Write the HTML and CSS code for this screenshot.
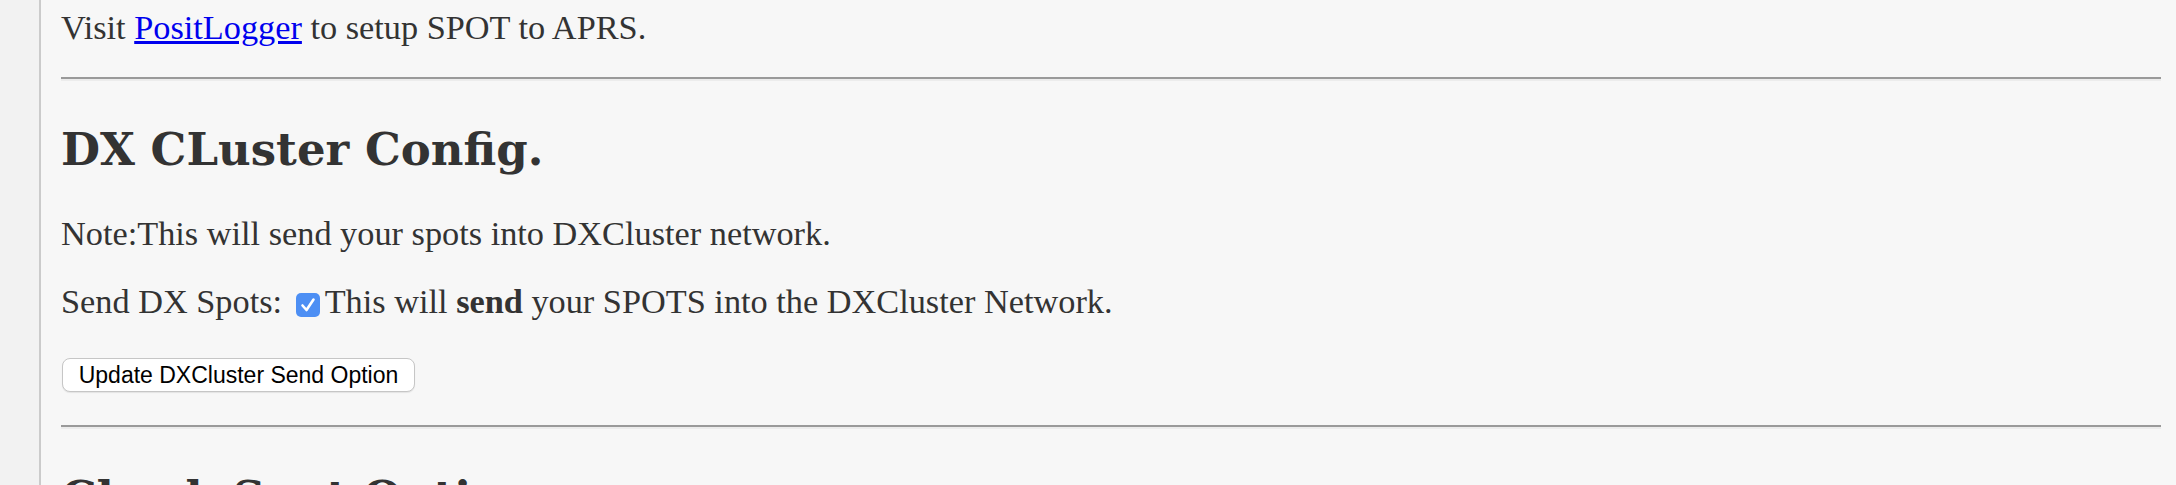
FILE: index.html
```html
<!DOCTYPE html>
<html>
<head>
<meta charset="utf-8">
<link rel="stylesheet" href="styles.css">
</head>
<body>
<div class="page">
  <aside class="side"></aside>
  <main class="content">
    <p class="first">Visit <a href="#">PositLogger</a> to setup SPOT to APRS.</p>
    <hr>
    <h2>DX CLuster Config.</h2>
    <p>Note:This will send your spots into DXCluster network.</p>
    <p class="opt">Send DX Spots: <span class="check"><svg width="24" height="24" viewBox="0 0 24 24"><rect x="0" y="0" width="24" height="24" rx="5" fill="#4d8ff4"/><polyline points="6.5,12.5 10.5,17 17.5,6.5" fill="none" stroke="#fff" stroke-width="2.6" stroke-linecap="round" stroke-linejoin="round"/></svg></span>This will <b>send</b> your SPOTS into the DXCluster Network.</p>
    <button class="btn" type="button">Update DXCluster Send Option</button>
    <hr>
    <h2>Check Spot Options</h2>
  </main>
</div>
</body>
</html>
```

FILE: styles.css
```css
html, body {
  margin: 0;
  padding: 0;
  height: 100%;
  overflow: hidden;
}
body {
  background: #f7f7f7;
  font-family: "Liberation Serif", Georgia, serif;
  color: #333333;
}
.page {
  display: flex;
  min-height: 100%;
}
.side {
  width: 39px;
  flex: 0 0 39px;
  background: #f2f2f2;
  border-right: 2px solid #cbcbcb;
}
.content {
  flex: 1;
  padding: 9px 15px 0 20px;
  background: #f7f7f7;
}
p {
  font-size: 34.3px;
  line-height: 36px;
  margin: 32px 0;
}
p.first {
  margin-top: 0;
}
a {
  color: #0000ee;
  text-decoration: underline;
}
hr {
  margin: 16px 0;
  border: 0;
  border-top: 2px solid #9a9a9a;
  border-bottom: 2px solid #ececec;
  height: 0;
}
h2 {
  font-family: "DejaVu Serif", Georgia, serif;
  font-size: 45px;
  line-height: 54px;
  font-weight: bold;
  margin: 42px 0 38px;
}
.opt {
  margin-bottom: 39px;
}
.check {
  display: inline-block;
  width: 24px;
  height: 24px;
  margin: 0 5px 0 5px;
  vertical-align: -4px;
}
.check svg {
  display: block;
}
.btn {
  display: block;
  height: 34px;
  width: 353px;
  padding: 0;
  margin: 0 0 33px 1px;
  background: #ffffff;
  border: 1px solid #c6c6c6;
  border-radius: 8px;
  box-shadow: 0 1px 1px rgba(0,0,0,0.08);
  font-family: "Liberation Sans", Arial, sans-serif;
  font-size: 23px;
  color: #000000;
  text-align: center;
}
```
